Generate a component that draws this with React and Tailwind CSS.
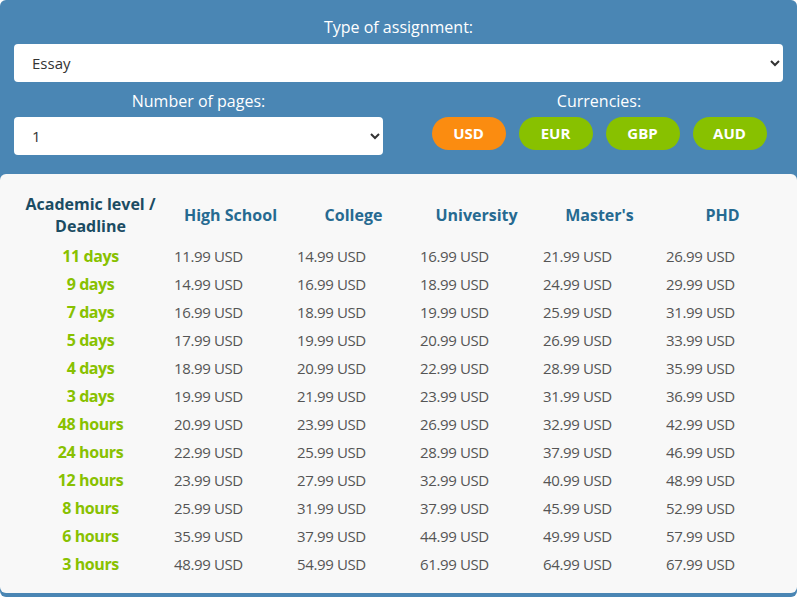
const rows = [
  ["11 days", "11.99", "14.99", "16.99", "21.99", "26.99"],
  ["9 days", "14.99", "16.99", "18.99", "24.99", "29.99"],
  ["7 days", "16.99", "18.99", "19.99", "25.99", "31.99"],
  ["5 days", "17.99", "19.99", "20.99", "26.99", "33.99"],
  ["4 days", "18.99", "20.99", "22.99", "28.99", "35.99"],
  ["3 days", "19.99", "21.99", "23.99", "31.99", "36.99"],
  ["48 hours", "20.99", "23.99", "26.99", "32.99", "42.99"],
  ["24 hours", "22.99", "25.99", "28.99", "37.99", "46.99"],
  ["12 hours", "23.99", "27.99", "32.99", "40.99", "48.99"],
  ["8 hours", "25.99", "31.99", "37.99", "45.99", "52.99"],
  ["6 hours", "35.99", "37.99", "44.99", "49.99", "57.99"],
  ["3 hours", "48.99", "54.99", "61.99", "64.99", "67.99"],
]

const levels = ["High School", "College", "University", "Master's", "PHD"]

export default function App() {
  return (
    <div className="w-[801px] h-[597px] bg-white" style={{ fontFamily: "'Open Sans', sans-serif" }}>
      <div className="w-[797px] h-[597px] bg-[#4a86b4] rounded-md flex flex-col pb-[4px]">
        <div className="px-[14px] pt-[16px]">
          <p className="text-center text-white text-[16px] leading-[22px]">Type of assignment:</p>
          <select className="mt-[6px] w-[769px] h-[38px] bg-white rounded-[4px] px-[14px] text-[15px] text-[#333]">
            <option>Essay</option>
          </select>
          <div className="flex mt-[8px]">
            <div className="w-[369px]">
              <p className="text-center text-white text-[16px] leading-[22px]">Number of pages:</p>
              <select className="mt-[5px] w-[369px] h-[38px] bg-white rounded-[4px] px-[14px] text-[15px] text-[#333]">
                <option>1</option>
              </select>
            </div>
            <div className="flex-1 flex flex-col items-center pl-[32px]">
              <p className="text-white text-[16px] leading-[22px]">Currencies:</p>
              <div className="flex gap-[13px] mt-[5px]">
                {["USD", "EUR", "GBP", "AUD"].map((c, i) => (
                  <button
                    key={c}
                    className={`w-[74px] h-[33px] rounded-full text-white font-bold text-[15px] ${i === 0 ? "bg-[#fb8c10]" : "bg-[#88c100]"}`}
                  >
                    {c}
                  </button>
                ))}
              </div>
            </div>
          </div>
        </div>
        <div className="mt-[19px] flex-1 bg-[#f8f8f8] rounded-md px-[12px] pt-[19px]">
          <div className="grid grid-cols-[157px_repeat(5,123px)] items-center">
            <div className="text-center font-bold text-[#1b4c63] text-[16px] leading-[22px]">Academic level /<br />Deadline</div>
            {levels.map((l) => (
              <div key={l} className="text-center font-bold text-[#266a91] text-[16px]">{l}</div>
            ))}
          </div>
          <div className="mt-[5px]">
            {rows.map((r) => (
              <div key={r[0]} className="grid grid-cols-[157px_repeat(5,123px)] h-[28px] items-center">
                <div className="text-center font-bold text-[#88c100] text-[16px] tracking-tight">{r[0]}</div>
                {r.slice(1).map((p, i) => (
                  <div key={i} className="pl-[5px] text-[15px] text-[#555] tracking-tight">{p} USD</div>
                ))}
              </div>
            ))}
          </div>
        </div>
      </div>
    </div>
  )
}
